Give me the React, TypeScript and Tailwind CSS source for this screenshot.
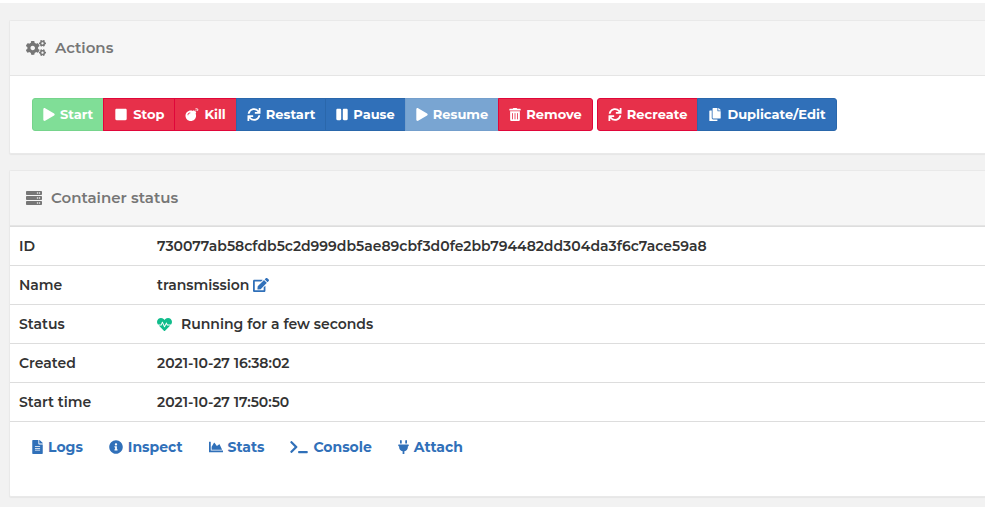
import type { ReactNode } from "react";
import type { IconType } from "react-icons";
import {
  FaCogs, FaPlay, FaStop, FaBomb, FaSync, FaPause, FaTrashAlt, FaCopy, FaServer, FaEdit,
  FaHeartbeat, FaFileAlt, FaInfoCircle, FaChartArea, FaTerminal, FaPlug,
} from "react-icons/fa";

type Tone = "success" | "danger" | "primary";

const tones: Record<Tone, string> = {
  success: "bg-[#23ae45] border-[#23ae45]",
  danger: "bg-[#e7304a] border-[#e0063a]",
  primary: "bg-[#3070b9] border-[#2a67ab]",
};

const disabledTones: Record<Tone, string> = {
  success: "bg-[#80de97] border-[#76d48c]",
  danger: "bg-[#f08394] border-[#ec6a84]",
  primary: "bg-[#79a5d2] border-[#749fcc]",
};

const narrow = "w-3 h-[13px]";
const wide = "w-[14px] h-[13px]";

type Action = { label: string; icon: IconType; size: string; tone: Tone; disabled?: boolean };

const lifecycle: Action[] = [
  { label: "Start", icon: FaPlay, size: narrow, tone: "success", disabled: true },
  { label: "Stop", icon: FaStop, size: wide, tone: "danger" },
  { label: "Kill", icon: FaBomb, size: wide, tone: "danger" },
  { label: "Restart", icon: FaSync, size: wide, tone: "primary" },
  { label: "Pause", icon: FaPause, size: narrow, tone: "primary" },
  { label: "Resume", icon: FaPlay, size: narrow, tone: "primary", disabled: true },
  { label: "Remove", icon: FaTrashAlt, size: narrow, tone: "danger" },
];

const editing: Action[] = [
  { label: "Recreate", icon: FaSync, size: wide, tone: "danger" },
  { label: "Duplicate/Edit", icon: FaCopy, size: wide, tone: "primary" },
];

const links = [
  { label: "Logs", icon: FaFileAlt, width: "w-[11px]" },
  { label: "Inspect", icon: FaInfoCircle, width: "w-[14px]" },
  { label: "Stats", icon: FaChartArea, width: "w-[14px]" },
  { label: "Console", icon: FaTerminal, width: "w-[18px]" },
  { label: "Attach", icon: FaPlug, width: "w-[11px]" },
];

function ButtonGroup({ actions }: { actions: Action[] }) {
  return (
    <div className="flex" role="group">
      {actions.map(({ label, icon: Icon, size, tone, disabled }) => (
        <button
          key={label}
          type="button"
          disabled={disabled}
          className={`-ml-px flex h-[33px] items-center gap-[5px] border px-[10px] text-[13px] font-bold text-white first:ml-0 first:rounded-l-[3px] last:rounded-r-[3px] ${
            disabled ? disabledTones[tone] : tones[tone]
          }`}
        >
          <Icon className={size} />
          {label}
        </button>
      ))}
    </div>
  );
}

function Widget({ icon, title, children }: { icon: ReactNode; title: string; children: ReactNode }) {
  return (
    <section className="rounded-l-[2px] border border-r-0 border-[#e9e9e9] bg-white shadow-[0_1px_1px_rgba(0,0,0,0.05)]">
      <header className="flex h-[55px] items-center gap-[9px] border-b border-[#e5e5e5] bg-[#f6f6f6] px-4 text-[#767676]">
        {icon}
        <h2 className="text-[15px] font-semibold">{title}</h2>
      </header>
      {children}
    </section>
  );
}

function Row({ label, children }: { label: string; children: ReactNode }) {
  return (
    <tr className="border-b border-[#dddddd]">
      <th scope="row" className="h-[39px] w-[138px] pl-[9px] text-left font-semibold">{label}</th>
      <td className="pl-[9px]">{children}</td>
    </tr>
  );
}

export default function App() {
  return (
    <div className="bg-white pt-[3px] font-['Montserrat','Inter',sans-serif] text-[#333333]">
      <main className="flex min-h-[504px] flex-col gap-4 bg-[#f2f2f2] pt-[17px] pb-[10px] pl-[9px]">
        <Widget icon={<FaCogs className="size-5" />} title="Actions">
          <div className="flex gap-1 p-[22px]">
            <ButtonGroup actions={lifecycle} />
            <ButtonGroup actions={editing} />
          </div>
        </Widget>
        <Widget icon={<FaServer className="size-4" />} title="Container status">
          <table className="w-full border-collapse border-t border-[#dddddd] text-[14px] font-semibold">
            <tbody>
              <Row label="ID">730077ab58cfdb5c2d999db5ae89cbf3d0fe2bb794482dd304da3f6c7ace59a8</Row>
              <Row label="Name">
                <span className="flex items-center gap-1">
                  transmission
                  <a href="#edit" aria-label="Edit name" className="text-[#3070b9]"><FaEdit className="size-4" /></a>
                </span>
              </Row>
              <Row label="Status">
                <span className="flex items-center gap-[9px]">
                  <FaHeartbeat className="size-[15px] text-[#11bd8c]" />
                  Running for a few seconds
                </span>
              </Row>
              <Row label="Created">2021-10-27 16:38:02</Row>
              <Row label="Start time">2021-10-27 17:50:50</Row>
            </tbody>
          </table>
          <nav className="flex gap-[26px] px-[22px] pt-[14px] pb-[38px] text-[14px] leading-[22px] font-bold text-[#3070b9]">
            {links.map(({ label, icon: Icon, width }) => (
              <a key={label} href={`#${label.toLowerCase()}`} className="flex items-center gap-[5px]">
                <Icon className={`h-[14px] ${width}`} />
                {label}
              </a>
            ))}
          </nav>
        </Widget>
      </main>
    </div>
  );
}
